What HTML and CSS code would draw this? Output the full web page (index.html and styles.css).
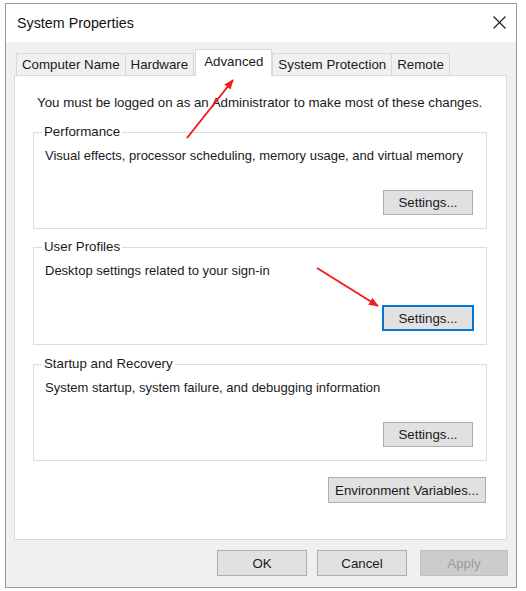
FILE: index.html
```html
<!DOCTYPE html>
<html lang="en">
<head>
    <meta charset="UTF-8">
    <meta name="viewport" content="width=device-width, initial-scale=1.0">
    <title>System Properties</title>
    <link rel="stylesheet" href="styles.css">
</head>
<body>
    <div class="window">
        <div class="titlebar">
            <span class="title">System Properties</span>
            <span class="close">
                <svg width="13" height="13" viewBox="0 0 13 13">
                    <path d="M0.5 0.5 L12.5 12.5 M12.5 0.5 L0.5 12.5" stroke="#1a1a1a" stroke-width="1.1" fill="none"/>
                </svg>
            </span>
        </div>

        <div class="client">
            <div class="tabs">
                <div class="tab">Computer Name</div>
                <div class="tab">Hardware</div>
                <div class="tab active">Advanced</div>
                <div class="tab">System Protection</div>
                <div class="tab">Remote</div>
            </div>

            <div class="panel">
                <p class="notice">You must be logged on as an Administrator to make most of these changes.</p>

                <fieldset class="group">
                    <legend>Performance</legend>
                    <p class="desc">Visual effects, processor scheduling, memory usage, and virtual memory</p>
                    <div class="row-end"><button class="btn">Settings...</button></div>
                </fieldset>

                <fieldset class="group">
                    <legend>User Profiles</legend>
                    <p class="desc">Desktop settings related to your sign-in</p>
                    <div class="row-end"><button class="btn focused">Settings...</button></div>
                </fieldset>

                <fieldset class="group">
                    <legend>Startup and Recovery</legend>
                    <p class="desc">System startup, system failure, and debugging information</p>
                    <div class="row-end"><button class="btn">Settings...</button></div>
                </fieldset>

                <div class="row-end env-row"><button class="btn env">Environment Variables...</button></div>
            </div>

            <div class="actions">
                <button class="btn">OK</button>
                <button class="btn">Cancel</button>
                <button class="btn apply" disabled>Apply</button>
            </div>
        </div>
    </div>

    <!-- red annotation arrows drawn over the dialog -->
    <svg class="arrows" width="526" height="591" viewBox="0 0 526 591">
        <defs>
            <marker id="head" markerWidth="10" markerHeight="8" refX="9" refY="4" orient="auto" markerUnits="userSpaceOnUse">
                <path d="M0 0 L10 4 L0 8 Z" fill="#f21d1d"/>
            </marker>
        </defs>
        <line x1="187" y1="138" x2="233" y2="80" stroke="#f21d1d" stroke-width="2" marker-end="url(#head)"/>
        <line x1="317" y1="268" x2="378" y2="306" stroke="#f21d1d" stroke-width="2" marker-end="url(#head)"/>
    </svg>
</body>
</html>
```

FILE: styles.css
```css
body {
    margin: 0;
    font-family: "Liberation Sans", Arial, sans-serif;
    font-size: 13.3px;
    color: #1a1a1a;
    background-color: #ffffff;
}
.window {
    width: 510px;
    height: 583px;
    margin: 3px 0 0 5px;
    border: 1px solid #9a9a9a;
    background-color: #f0f0f0;
    display: flex;
    flex-direction: column;
}
.titlebar {
    height: 38px;
    background-color: #ffffff;
    display: flex;
    align-items: center;
    justify-content: space-between;
    padding: 0 10px 0 11px;
}
.title {
    font-size: 14.3px;
    color: #111;
}
.close {
    display: flex;
    margin-top: -2px;
}
.client {
    padding: 7px 9px 0 8px;
    flex: 1;
}
.tabs {
    display: flex;
    align-items: flex-end;
    height: 26px;
    padding-left: 2px;
    position: relative;
    z-index: 1;
}
.tab {
    height: 21px;
    line-height: 21px;
    padding: 0 5px;
    border: 1px solid #d9d9d9;
    border-bottom: none;
    background-color: #f0f0f0;
    margin-left: -1px;
}
.tab:first-child {
    margin-left: 0;
}
.tab.active {
    height: 26px;
    line-height: 23px;
    padding: 0 8px;
    background-color: #ffffff;
    margin: 0 1px 0 1px;
    position: relative;
    top: 1px;
}
.panel {
    border: 1px solid #d9d9d9;
    background-color: #ffffff;
    height: 463px;
    padding: 0 19px 0 18px;
}
.notice {
    margin: 19px 0 0 4px;
    line-height: 16px;
}
.group {
    margin: 13px 0 0 0;
    border: 1px solid #dcdcdc;
    padding: 0 12px 13px 11px;
    min-width: 0;
}
.group + .group {
    margin-top: 10px;
}
.group:last-of-type {
    margin-top: 11px;
}
.group legend {
    padding: 0 2px;
    margin-left: -3px;
    line-height: 16px;
}
.desc {
    margin: 8px 0 0 0;
    line-height: 16px;
    font-size: 13px;
}
.row-end {
    display: flex;
    justify-content: flex-end;
}
.group .row-end {
    margin-top: 26px;
    margin-right: 1px;
}
.btn {
    font-family: "Liberation Sans", Arial, sans-serif;
    font-size: 13.3px;
    color: #1a1a1a;
    height: 25px;
    width: 90px;
    background-color: #e1e1e1;
    border: 1px solid #adadad;
    padding: 0;
}
.btn.focused {
    border: 2px solid #0078d7;
    width: 92px;
    height: 26px;
    margin-right: -1px;
}
.btn:disabled {
    background-color: #cccccc;
    border-color: #bfbfbf;
    color: #9a9a9a;
}
.env-row {
    margin-top: 16px;
    margin-right: 1px;
}
.btn.env {
    width: 158px;
    height: 26px;
}
.actions {
    display: flex;
    justify-content: flex-end;
    gap: 10px;
    margin-top: 10px;
    margin-right: -1px;
}
.actions .btn {
    height: 26px;
}
.actions .apply {
    width: 88px;
    margin-left: 3px;
}
.arrows {
    position: absolute;
    left: 0;
    top: 0;
    pointer-events: none;
}
```
